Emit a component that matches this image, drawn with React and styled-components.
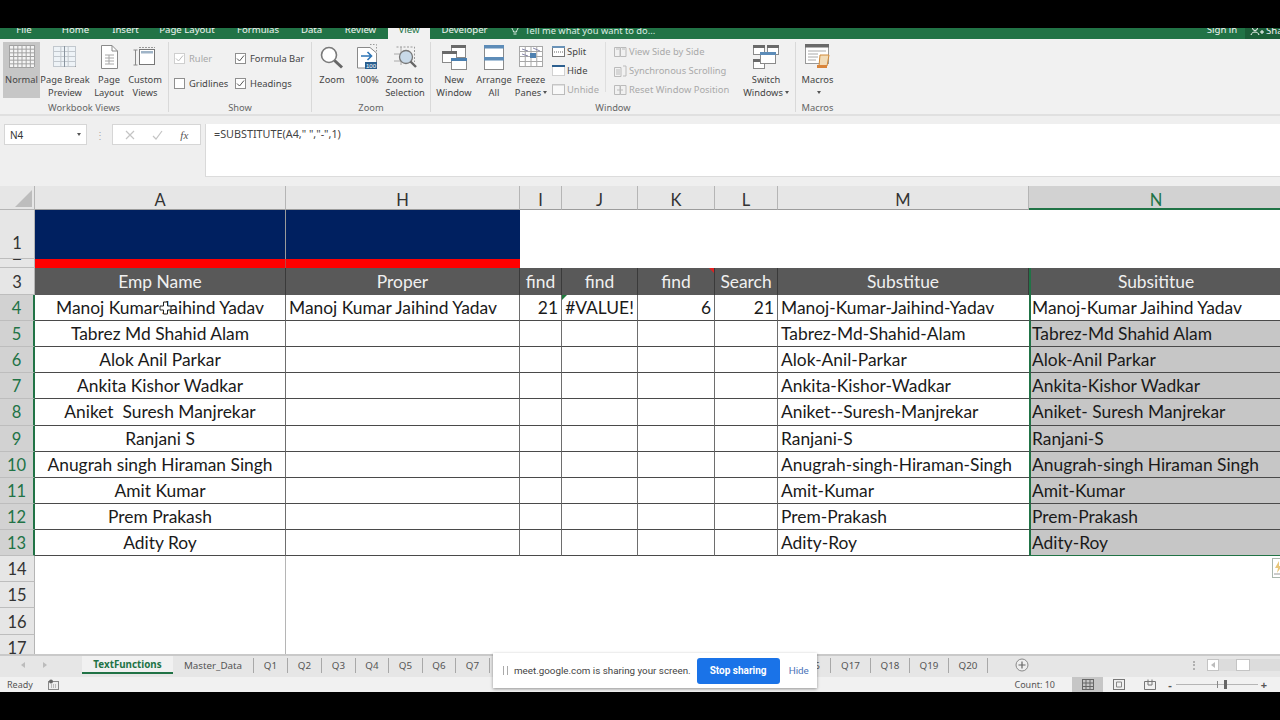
import React from "react";
import styled, { createGlobalStyle } from "styled-components";

const Global = createGlobalStyle`
  html, body { margin: 0; padding: 0; background: #000; }
  * { box-sizing: border-box; }
`;
const UI = `"Noto Sans", "Open Sans", sans-serif`;
const CELL = `"Lato", "Open Sans", sans-serif`;

const Page = styled.div`
  width: 1280px; height: 720px; background: #000; padding-top: 28px; overflow: hidden;
  position: relative; display: flex; flex-direction: column; font-family: ${UI};
`;
const Chrome = styled.div`
  height: 664px; display: flex; flex-direction: column; overflow: hidden; position: relative;
`;
const TabBar = styled.div`
  height: 11px; flex: none; background: #217346; display: flex; align-items: flex-end; overflow: hidden;
`;
const MenuTab = styled.div`
  width: ${p => p.$w}px; flex: none; height: 18px; line-height: 18px; text-align: center; font-size: 9.6px;
  color: ${p => (p.$on ? "#217346" : "#f2f2f2")}; background: ${p => (p.$on ? "#f1f1f1" : "transparent")};
`;
const TellMe = styled.div`
  display: flex; align-items: center; gap: 5px; height: 18px; margin-left: 11px; font-size: 9.3px; color: #dfeee5; flex: none; width: 689px;
`;
const Share = styled.div`
  flex: 1; height: 18px; background: #1b5e38; display: flex; align-items: center; gap: 2px; padding-left: 5px; color: #f2f2f2; font-size: 9.6px; overflow: hidden; white-space: nowrap;
`;
const SignIn = styled(MenuTab)``;

const Ribbon = styled.div`
  height: 77px; flex: none; background: #f1f1f1; display: flex; padding-top: 3px; border-bottom: 2px solid #e0e0e0;
`;
const Group = styled.div`
  width: ${p => p.$w}px; height: 70px; flex: none; display: flex; flex-direction: column;
  border-right: ${p => (p.$last ? "none" : "1px solid #d9d9d9")}; padding-left: ${p => p.$pl || 0}px;
`;
const GroupBody = styled.div`
  height: 56px; display: flex; flex: none; position: relative;
`;
const GroupLabel = styled.div`
  margin-left: ${p => (p.$ml ? -p.$ml : 0)}px; margin-top: 4px; height: 12px; flex: none; line-height: 12px; text-align: center; font-size: 9.3px; color: #666;
`;
const BigButton = styled.div`
  width: ${p => p.$w}px; flex: none; height: 56px; display: flex; flex-direction: column; align-items: center;
  background: ${p => (p.$on ? "#c6c6c6" : "transparent")};
`;
const IconSlot = styled.div`
  height: 30px; flex: none; display: flex; align-items: center; justify-content: center;
`;
const BigLabel = styled.div`
  font-size: 9.3px; line-height: 13px; color: #444; text-align: center; white-space: nowrap; padding-top: 1px;
`;
const Caret = styled.span`
  display: inline-block; width: 0; height: 0; margin-left: 2px; vertical-align: 2px;
  border-left: 2.5px solid transparent; border-right: 2.5px solid transparent; border-top: 3px solid #555;
`;
const ShowGrid = styled.div`
  display: grid; grid-template-columns: 61px 72px; grid-auto-rows: 25px; padding: 4px 0 0 5px; flex: 1;
`;
const CheckRow = styled.div`
  display: flex; align-items: center; gap: 4px; font-size: 9.4px; color: ${p => (p.$off ? "#a8a8a8" : "#444")}; white-space: nowrap;
`;
const Box = styled.span`
  width: 11px; height: 11px; flex: none; background: #fff; border: 1px solid ${p => (p.$off ? "#cfcfcf" : "#8f8f8f")};
  display: flex; align-items: center; justify-content: center;
`;
const SmallList = styled.div`
  width: ${p => p.$w}px; flex: none; display: flex; flex-direction: column; padding-left: ${p => p.$pl || 0}px;
  border-left: ${p => (p.$sep ? "1px solid #dedede" : "none")}; height: 50px;
`;
const SmallRow = styled.div`
  height: 19px; flex: none; display: flex; align-items: center; gap: 2px; font-size: 9.4px; white-space: nowrap;
  color: ${p => (p.$off ? "#a9a9a9" : "#444")};
`;

const FormulaBar = styled.div`
  height: 70px; flex: none; background: #efefef; display: flex; align-items: flex-start; padding: 8px 0 0 4px;
`;
const NameBox = styled.div`
  width: 83px; height: 21px; background: #fff; border: 1px solid #d6d6d6; display: flex; align-items: center; justify-content: space-between;
  padding: 0 5px; font-size: 10px; color: #333; flex: none;
`;
const Dots = styled.div`
  width: 25px; height: 21px; flex: none; display: flex; align-items: center; justify-content: center; color: #aaa; font-size: 10px; letter-spacing: 0;
`;
const FxBox = styled.div`
  width: 89px; height: 21px; flex: none; background: #fff; border: 1px solid #d6d6d6; display: flex; align-items: center; justify-content: space-around; padding: 0 3px; margin-right: 4px;
`;
const Fx = styled.span`
  font-family: "Liberation Serif", serif; font-style: italic; font-size: 11px; color: #555;
`;
const FormulaInput = styled.div`
  flex: 1; height: 53px; background: #fff; border-left: 1px solid #d9d9d9; border-bottom: 1px solid #dcdcdc; padding: 3px 0 0 8px; font-size: 10.8px; line-height: 14px; color: #444;
`;

const Sheet = styled.div`
  height: 468px; flex: none; display: grid; position: relative; overflow: hidden; background: #fff;
  grid-template-columns: 35px 251px 234px 42px 76px 77px 63px 251px 255px;
  grid-template-rows: 24px 49px 9px 27px repeat(10, 26.12px) repeat(4, 26.2px);
  font-family: ${CELL}; font-size: 17.4px; color: #1a1a1a;
`;
const Corner = styled.div`
  background: #e6e6e6; border-right: 1px solid #b5b5b5; border-bottom: 1px solid #b5b5b5; position: relative; overflow: hidden;
  &::after { content: ""; position: absolute; right: 2px; bottom: 2px; width: 0; height: 0; border-left: 17px solid transparent; border-bottom: 17px solid #bdbdbd; }
`;
const ColHead = styled.div`
  background: ${p => (p.$sel ? "#d2d2d2" : "#e6e6e6")}; color: ${p => (p.$sel ? "#217346" : "#333")};
  border-right: 1px solid ${p => (p.$sel ? "#d2d2d2" : "#b5b5b5")}; border-bottom: ${p => (p.$sel ? "2px solid #217346" : "1px solid #9c9c9c")};
  display: flex; align-items: center; justify-content: center; padding-top: 5px; font-size: 16.5px;
`;
const RowHead = styled.div`
  background: ${p => (p.$sel ? "#d2d2d2" : "#e6e6e6")}; color: ${p => (p.$sel ? "#217346" : "#333")};
  border-right: ${p => (p.$sel ? "2px solid #217346" : "1px solid #b5b5b5")}; border-bottom: 1px solid #bdbdbd;
  display: flex; align-items: ${p => (p.$end ? "flex-end" : "center")}; justify-content: center; overflow: hidden; font-size: 16.5px;
  padding-bottom: ${p => (p.$end ? 5 : 0)}px; padding-top: ${p => (p.$end ? 0 : 1)}px;
`;
const ClippedHead = styled(RowHead)`
  align-items: flex-start; padding: 0;
`;
const ClippedDigit = styled.span`
  margin-top: -15px; line-height: 20px;
`;
const Cell = styled.div`
  min-width: 0; overflow: hidden; white-space: pre; display: flex; align-items: center; padding: 0 3px 0 ${p => (p.$sel ? 1 : 3)}px;
  justify-content: ${p => p.$align || "flex-start"};
  background: ${p => p.$bg || "#fff"}; color: ${p => p.$fg || "#1a1a1a"};
  border-right: ${p => (p.$r ? `1px solid ${p.$r}` : "none")};
  border-bottom: ${p => (p.$b ? `1px solid ${p.$b}` : "none")};
  border-left: ${p => (p.$sel ? "2px solid #217346" : "none")};
  position: relative;
`;
const Flag = styled.span`
  position: absolute; top: 0; width: 0; height: 0; border-top: 5px solid ${p => p.$c};
  ${p => (p.$right ? "right: 0; border-left: 5px solid transparent;" : "left: 0; border-right: 5px solid transparent;")}
`;
const Pointer = styled.span`
  position: absolute; left: 159px; top: 115px; width: 13px; height: 14px; display: flex;
`;
const QuickTag = styled.span`
  position: absolute; left: 1272px; top: 372px; width: 12px; height: 20px; background: #fff; border: 1px solid #a9b6ad; display: flex; align-items: center; padding-left: 1px;
`;

const SheetTabs = styled.div`
  height: 23px; flex: none; background: #e6e6e6; border-top: 2px solid #c9c9c9; padding-bottom: 3px; display: flex; align-items: center; position: relative; overflow: hidden;
`;
const Nav = styled.div`
  width: 82px; flex: none; display: flex; gap: 18px; padding-left: 21px; align-items: center;
`;
const Arrow = styled.span`
  width: 0; height: 0; border-top: 3px solid transparent; border-bottom: 3px solid transparent;
  ${p => (p.$left ? "border-right: 4px solid #bcbcbc;" : "border-left: 4px solid #bcbcbc;")}
`;
const SheetTab = styled.div`
  width: ${p => p.$w}px; flex: none; height: ${p => (p.$on ? "18px" : "15px")}; display: flex; align-items: center; justify-content: center;
  font-size: 9.8px; white-space: nowrap;
  color: ${p => (p.$on ? "#217346" : "#555")}; font-weight: ${p => (p.$on ? 700 : 400)};
  background: ${p => (p.$on ? "#f1f1f1" : "transparent")};
  border-bottom: ${p => (p.$on ? "2px solid #217346" : "none")};
  border-right: ${p => (p.$on ? "none" : "1px solid #a8a8a8")};
`;
const HiddenTabs = styled.div`
  width: 301px; flex: none;
`;
const AddSlot = styled.div`
  width: 41px; flex: none; display: flex; justify-content: flex-end;
`;
const ScrollArea = styled.div`
  margin-left: auto; display: flex; align-items: center; height: 100%;
`;
const VDots = styled.span`
  width: 2px; height: 9px; margin-right: 12px; border-left: 2px dotted #b0b0b0;
`;
const ScrollBtn = styled.span`
  width: 12px; height: 12px; background: #fff; border: 1px solid #c4c4c4; display: flex; align-items: center; justify-content: center;
`;
const Track = styled.span`
  width: 61px; height: 12px; background: #dcdcdc; display: flex; padding-left: 17px;
`;
const Thumb = styled.span`
  width: 14px; height: 12px; background: #fff; border: 1px solid #c4c4c4;
`;

const Status = styled.div`
  height: 15px; flex: none; background: #f1f1f1; display: flex; align-items: center; font-size: 9px; color: #555; padding-left: 7px; overflow: hidden;
`;
const StatusGap = styled.span`
  width: ${p => p.$w}px; flex: none;
`;
const Count = styled.span`
  margin-left: auto; margin-right: 17px;
`;
const ViewBtn = styled.div`
  width: 31px; height: 15px; flex: none; display: flex; align-items: center; justify-content: center;
  background: ${p => (p.$on ? "#c6c6c6" : "transparent")};
`;
const ZoomSlider = styled.div`
  width: 82px; height: 1px; background: #b5b5b5; position: relative; margin: 0 1px; flex: none;
  &::before { content: ""; position: absolute; left: 41px; top: -3px; width: 1px; height: 7px; background: #888; }
  &::after { content: ""; position: absolute; left: 48px; top: -4px; width: 3px; height: 9px; background: #666; }
`;
const Pm = styled.span`
  font-size: 11px; font-weight: 700; color: #555; width: 10px; text-align: center; flex: none;
`;

const Popup = styled.div`
  position: absolute; left: 493px; top: 653px; width: 324px; height: 35px; background: #fff; box-shadow: 0 1px 3px rgba(0,0,0,.4);
  display: flex; align-items: center; padding-left: 10px; font-size: 9.8px; color: #444; white-space: nowrap; font-family: "Roboto", ${UI};
`;
const Grip = styled.span`
  width: 5px; height: 9px; border-left: 1px solid #aaa; border-right: 1px solid #aaa; margin-right: 6px; flex: none;
`;
const StopBtn = styled.div`
  width: 83px; height: 26px; background: #1a73e8; color: #fff; border-radius: 3px; display: flex; align-items: center; justify-content: center; font-weight: 700; font-size: 10px; margin-left: 6px; flex: none;
`;
const HideLink = styled.span`
  color: #4a72b8; margin-left: 9px; font-size: 9.8px;
`;

/* ---- icons ---- */
const S = ({ w, h, children }) => <svg width={w} height={h} viewBox={`0 0 ${w} ${h}`} fill="none" style={{ display: "block", flex: "none" }}>{children}</svg>;

const GridLines = ({ x, y, w, h, nx, ny, c }) => {
  const out = [];
  for (let i = 0; i <= nx; i++) out.push(<path key={"x" + i} d={`M${x + (w * i) / nx + .5} ${y}V${y + h}`} stroke={c} />);
  for (let i = 0; i <= ny; i++) out.push(<path key={"y" + i} d={`M${x} ${y + (h * i) / ny + .5}H${x + w}`} stroke={c} />);
  return <>{out}</>;
};
const INormal = () => <S w={26} h={24}><rect x=".5" y=".5" width="25" height="22" fill="#f4f4f4" /><GridLines x={0} y={0} w={25} h={22} nx={6} ny={6} c="#a2a2a2" /></S>;
const IBreak = () => <S w={24} h={22}><rect x=".5" y=".5" width="22" height="20" fill="#eef3f7" stroke="#a0a0a0" /><GridLines x={0} y={0} w={22} h={20} nx={3} ny={4} c="#c2c8ce" /><path d="M11.5 0V21" stroke="#8a949e" /></S>;
const IPageLayout = () => <S w={19} h={24}><path d="M1.5.5H12L17.5 6V23.5H1.5Z" fill="#fff" stroke="#8a8a8a" /><path d="M12 .5V6H17.5" stroke="#8a8a8a" /><path d="M5 10H14M5 13H14M5 16H14M5 19H14M9 10V19" stroke="#a8a8a8" /></S>;
const ICustom = () => <S w={24} h={22}><path d="M2.5 4V19M.5 4H4.5M.5 19H4.5" stroke="#8a8a8a" /><rect x="6.5" y="3.5" width="15" height="15" fill="#fff" stroke="#777" /><rect x="8" y="5" width="12" height="2.5" fill="#9fb4c7" /><path d="M6 1.5H22" stroke="#999" strokeDasharray="2 1" /></S>;
const IZoom = () => <S w={24} h={23}><circle cx="9" cy="9" r="7.5" fill="#fff" stroke="#7a7a7a" strokeWidth="1.6" /><path d="M14.5 14.5L22 21.5" stroke="#666" strokeWidth="3" /></S>;
const I100 = () => <S w={22} h={26}><path d="M1.5 3.5H14L20.5 9V24H1.5Z" fill="#fff" stroke="#8a8a8a" /><path d="M14 .5H20.5V9" stroke="#999" strokeDasharray="1.5 1.5" /><path d="M5 12H15M11.5 8L15.5 12L11.5 16" stroke="#2e75b6" strokeWidth="1.6" /><rect x="9" y="18" width="12" height="7" fill="#2a5f8f" /><text x="15" y="24" fontSize="6" fill="#fff" textAnchor="middle" fontFamily="Liberation Sans, sans-serif">100</text></S>;
const IZoomSel = () => <S w={25} h={24}><path d="M3.5 2H21.5V17" stroke="#999" strokeDasharray="2 1.5" /><path d="M1 9H19M8 2V20M1 16H8" stroke="#aaa" /><circle cx="13" cy="12" r="6.5" fill="#c8d9e8" stroke="#777" strokeWidth="1.3" /><path d="M17.5 16.5L23 22" stroke="#666" strokeWidth="2.4" /></S>;
const Win = ({ x, y, w, h, top = "#6a6a6a" }) => <><rect x={x + .5} y={y + .5} width={w} height={h} fill="#fff" stroke="#8a8a8a" /><rect x={x} y={y} width={w + 1} height="3" fill={top} /></>;
const INewWin = () => <S w={25} h={25}><Win x={9} y={0} w={14} h={12} /><Win x={0} y={6} w={14} h={11} /><Win x={9} y={13} w={15} h={11} top="#4a7fb0" /></S>;
const IArrange = () => <S w={20} h={25}><rect x=".5" y=".5" width="19" height="24" fill="#fff" stroke="#8a8a8a" /><rect x="0" y="0" width="20" height="3.5" fill="#5d8cb8" /><rect x="0" y="12" width="20" height="3.5" fill="#5d8cb8" /></S>;
const IFreeze = () => <S w={25} h={22}><rect x=".5" y=".5" width="23" height="20" fill="#fff" stroke="#a0a0a0" /><GridLines x={0} y={0} w={23} h={20} nx={4} ny={4} c="#a8a8a8" /><rect x="11" y="7" width="6" height="5" fill="#4f81b0" /><path d="M3 3L9 5M14 2L21 5M3 8L9 10" stroke="#88a" /></S>;
const ISplit = () => <S w={13} h={11}><rect x=".5" y=".5" width="12" height="10" fill="#fff" stroke="#777" /><rect x="0" y="0" width="13" height="2" fill="#6a93b8" /><path d="M2 6H11" stroke="#666" strokeDasharray="1 1" /></S>;
const IHide = () => <S w={13} h={11}><rect x=".5" y=".5" width="12" height="10" fill="#fff" stroke="#aaa" strokeDasharray="1 1" /><rect x="0" y="0" width="13" height="2" fill="#2c5f8f" /></S>;
const IUnhide = () => <S w={13} h={11}><rect x=".5" y=".5" width="12" height="10" fill="#f8f8f8" stroke="#bbb" /><rect x="0" y="0" width="13" height="1.5" fill="#c6c6c6" /></S>;
const ISideBy = () => <S w={13} h={11}><path d="M.5 1.5H6V10.5H.5ZM6.5 1.5H12V10.5H6.5ZM2 3H5M8 3H11" stroke="#bbb" /></S>;
const ISync = () => <S w={13} h={12}><path d="M.5 2.5H7V11.5H.5ZM2 5H6M2 7H6M2 9H6M9 1H12V11H9" stroke="#bbb" /></S>;
const IReset = () => <S w={13} h={11}><path d="M.5 1.5H6V10.5H.5ZM6.5 1.5H12V10.5H6.5ZM3 6H9" stroke="#bbb" /></S>;
const ISwitch = () => <S w={26} h={24}><Win x={0} y={0} w={11} h={9} /><Win x={14} y={0} w={11} h={9} /><Win x={0} y={14} w={11} h={9} /><Win x={7} y={7} w={15} h={11} top="#5d8cb8" /></S>;
const IMacros = () => <S w={26} h={26}><rect x=".5" y=".5" width="23" height="19" fill="#fff" stroke="#999" /><rect x="0" y="0" width="24" height="3.5" fill="#6a6a6a" /><path d="M3 7H21M3 10H13M3 13H13M3 16H11" stroke="#aaa" /><path d="M15 11H24L22 22H14Z" fill="#f2dcb8" stroke="#d08a3a" /><rect x="12" y="21" width="10" height="3" fill="#d9843a" /></S>;
const Tick = ({ c = "#666" }) => <S w={9} h={9}><path d="M1 4.5L3.5 7L8 1.5" stroke={c} strokeWidth="1" /></S>;
const Bulb = () => <S w={10} h={12}><path d="M2 4C2 1 8 1 8 4C8 5.5 6.5 6 6.5 8H3.5C3.5 6 2 5.5 2 4ZM3.5 10H6.5" stroke="#dfeee5" /></S>;
const ShareIco = () => <S w={14} h={13}><circle cx="5" cy="4" r="2.5" stroke="#fff" /><path d="M1 11C2 7 8 7 9 11M10 8H14M12 6V10" stroke="#fff" /></S>;
const PlusCursor = () => <S w={13} h={14}><path d="M4.5 1H8.5V5H12V9H8.5V13H4.5V9H1V5H4.5Z" fill="#fff" stroke="#222" /></S>;
const Bolt = () => <S w={9} h={14}><path d="M5 0L1 7H4L3 12L8 5H5Z" fill="#e8c67a" /><path d="M0 13H8" stroke="#999" /></S>;
const AddIco = () => <S w={14} h={14}><circle cx="7" cy="7" r="6" fill="#eee" stroke="#8a8a8a" /><path d="M3.5 7H10.5M7 3.5V10.5" stroke="#666" strokeWidth="1.2" /></S>;
const MacroRec = () => <S w={12} h={11}><rect x=".5" y="2.5" width="10" height="8" fill="#eee" stroke="#888" /><circle cx="3" cy="2.5" r="2" fill="#666" /><path d="M3 6H9M3 8H9" stroke="#888" strokeDasharray="1 1" /></S>;
const VNormal = () => <S w={12} h={11}><rect x=".5" y=".5" width="11" height="10" stroke="#666" /><path d="M4 0V11M8 0V11M0 4H12M0 7.5H12" stroke="#666" /></S>;
const VLayout = () => <S w={12} h={11}><rect x=".5" y=".5" width="11" height="10" stroke="#777" /><path d="M3.5 3H8.5V8H3.5Z" stroke="#888" /></S>;
const VBreak = () => <S w={12} h={11}><path d="M.5 2.5H11.5V10.5H.5ZM4 .5V6H8V.5" stroke="#777" /></S>;

/* ---- data ---- */
const COLS = [["A"], ["H"], ["I"], ["J"], ["K"], ["L"], ["M"], ["N", true]];
const HEADS = ["Emp Name", "Proper", "find", "find", "find", "Search", "Substitue", "Subsititue"];
const NAMES = ["Manoj Kumar Jaihind Yadav", "Tabrez Md Shahid Alam", "Alok Anil Parkar", "Ankita Kishor Wadkar", "Aniket  Suresh Manjrekar", "Ranjani S", "Anugrah singh Hiraman Singh", "Amit Kumar", "Prem Prakash", "Adity Roy"];
const SUB1 = ["Manoj-Kumar-Jaihind-Yadav", "Tabrez-Md-Shahid-Alam", "Alok-Anil-Parkar", "Ankita-Kishor-Wadkar", "Aniket--Suresh-Manjrekar", "Ranjani-S", "Anugrah-singh-Hiraman-Singh", "Amit-Kumar", "Prem-Prakash", "Adity-Roy"];
const SUB2 = ["Manoj-Kumar Jaihind Yadav", "Tabrez-Md Shahid Alam", "Alok-Anil Parkar", "Ankita-Kishor Wadkar", "Aniket- Suresh Manjrekar", "Ranjani-S", "Anugrah-singh Hiraman Singh", "Amit-Kumar", "Prem-Prakash", "Adity-Roy"];
const MENU = [["File", 48], ["Home", 55], ["Insert", 45], ["Page Layout", 78], ["Formulas", 64], ["Data", 43], ["Review", 55], ["View", 42, true], ["Developer", 69]];
const TABS_A = [["Master_Data", 81], ["Q1", 34], ["Q2", 34], ["Q3", 34], ["Q4", 33], ["Q5", 34], ["Q6", 33], ["Q7", 34]];
const TABS_B = [["Q16", 40], ["Q17", 40], ["Q18", 39], ["Q19", 39], ["Q20", 39]];

const Big = ({ w, on, icon, a, b, caret }) => (
  <BigButton $w={w} $on={on}>
    <IconSlot>{icon}</IconSlot>
    <BigLabel>{a}<br />{b}{caret && <Caret />}</BigLabel>
  </BigButton>
);
const Check = ({ label, on, off }) => (
  <CheckRow $off={off}><Box $off={off}>{on && <Tick c={off ? "#bbb" : "#555"} />}</Box>{label}</CheckRow>
);

export default function App() {
  const LINE = "#4a4a4a";
  return (
    <Page>
      <Global />
      <Chrome>
        <TabBar>
          {MENU.map(([t, w, on]) => <MenuTab key={t} $w={w} $on={on}>{t}</MenuTab>)}
          <TellMe><Bulb />Tell me what you want to do...</TellMe>
          <SignIn $w={46}>Sign in</SignIn>
          <Share><ShareIco />Share</Share>
        </TabBar>

        <Ribbon>
          <Group $w={169} $pl={3}>
            <GroupBody>
              <Big w={37} on icon={<INormal />} a="Normal" />
              <Big w={50} icon={<IBreak />} a="Page Break" b="Preview" />
              <Big w={38} icon={<IPageLayout />} a="Page" b="Layout" />
              <Big w={34} icon={<ICustom />} a="Custom" b="Views" />
            </GroupBody>
            <GroupLabel $ml={3}>Workbook Views</GroupLabel>
          </Group>
          <Group $w={143}>
            <GroupBody>
              <ShowGrid>
                <Check label="Ruler" on off />
                <Check label="Formula Bar" on />
                <Check label="Gridlines" />
                <Check label="Headings" on />
              </ShowGrid>
            </GroupBody>
            <GroupLabel>Show</GroupLabel>
          </Group>
          <Group $w={119} $pl={2}>
            <GroupBody>
              <Big w={36} icon={<IZoom />} a="Zoom" />
              <Big w={34} icon={<I100 />} a="100%" />
              <Big w={42} icon={<IZoomSel />} a="Zoom to" b="Selection" />
            </GroupBody>
            <GroupLabel $ml={2}>Zoom</GroupLabel>
          </Group>
          <Group $w={365} $pl={3}>
            <GroupBody>
              <Big w={40} icon={<INewWin />} a="New" b="Window" />
              <Big w={40} icon={<IArrange />} a="Arrange" b="All" />
              <Big w={34} icon={<IFreeze />} a="Freeze" b="Panes" caret />
              <SmallList $w={57} $pl={4}>
                <SmallRow><ISplit />Split</SmallRow>
                <SmallRow><IHide />Hide</SmallRow>
                <SmallRow $off><IUnhide />Unhide</SmallRow>
              </SmallList>
              <SmallList $w={132} $pl={8} $sep>
                <SmallRow $off><ISideBy />View Side by Side</SmallRow>
                <SmallRow $off><ISync />Synchronous Scrolling</SmallRow>
                <SmallRow $off><IReset />Reset Window Position</SmallRow>
              </SmallList>
              <Big w={58} icon={<ISwitch />} a="Switch" b="Windows" caret />
            </GroupBody>
            <GroupLabel $ml={3}>Window</GroupLabel>
          </Group>
          <Group $w={43} $last>
            <GroupBody>
              <Big w={43} icon={<IMacros />} a="Macros" b={<Caret />} />
            </GroupBody>
            <GroupLabel>Macros</GroupLabel>
          </Group>
        </Ribbon>

        <FormulaBar>
          <NameBox>N4<Caret /></NameBox>
          <Dots>⋮</Dots>
          <FxBox>
            <S w={10} h={10}><path d="M1 1L9 9M9 1L1 9" stroke="#c4c4c4" strokeWidth="1.2" /></S>
            <S w={11} h={10}><path d="M1 6L4 9L10 1" stroke="#c4c4c4" strokeWidth="1.2" /></S>
            <Fx>fx</Fx>
          </FxBox>
          <FormulaInput>=SUBSTITUTE(A4," ","-",1)</FormulaInput>
        </FormulaBar>

        <Sheet>
          <Corner />
          {COLS.map(([c, sel]) => <ColHead key={c} $sel={sel}>{c}</ColHead>)}

          <RowHead $end>1</RowHead>
          <Cell $bg="#002060" $r="#9a9a9a" />
          <Cell $bg="#002060" />
          {[0, 1, 2, 3, 4, 5].map(i => <Cell key={i} />)}

          <ClippedHead><ClippedDigit>2</ClippedDigit></ClippedHead>
          <Cell $bg="#ff0000" $r="#c04040" />
          <Cell $bg="#ff0000" />
          {[0, 1, 2, 3, 4, 5].map(i => <Cell key={i} />)}

          <RowHead>3</RowHead>
          {HEADS.map((h, i) => (
            <Cell key={i} $bg="#595959" $fg="#f0f0f0" $align="center" $r="#3a3a3a" $sel={i === 7}>
              {h}{i === 4 && <Flag $c="#e02020" $right />}
            </Cell>
          ))}

          {NAMES.map((n, i) => {
            const first = i === 0;
            const fill = first ? "#fff" : "#c6c6c6";
            const last = i === 9;
            return (
              <React.Fragment key={n}>
                <RowHead $sel>{i + 4}</RowHead>
                <Cell $align="center" $r="#6e6e6e" $b={LINE}>{n}</Cell>
                <Cell $r="#6e6e6e" $b={LINE}>{first ? "Manoj Kumar Jaihind Yadav" : ""}</Cell>
                <Cell $align="flex-end" $r="#6e6e6e" $b={LINE}>{first ? "21" : ""}</Cell>
                <Cell $r="#6e6e6e" $b={LINE} $align="center">{first ? "#VALUE!" : ""}{first && <Flag $c="#1f7a3d" />}</Cell>
                <Cell $align="flex-end" $r="#6e6e6e" $b={LINE}>{first ? "6" : ""}</Cell>
                <Cell $align="flex-end" $r="#6e6e6e" $b={LINE}>{first ? "21" : ""}</Cell>
                <Cell $b={LINE}>{SUB1[i]}</Cell>
                <Cell $bg={fill} $sel $b={last ? "#217346" : LINE}>{SUB2[i]}</Cell>
              </React.Fragment>
            );
          })}

          {[14, 15, 16, 17].map(r => (
            <React.Fragment key={r}>
              <RowHead>{r}</RowHead>
              <Cell $r="#b5b5b5" />
              {[0, 1, 2, 3, 4, 5, 6].map(i => <Cell key={i} />)}
            </React.Fragment>
          ))}

          <Pointer><PlusCursor /></Pointer>
          <QuickTag><Bolt /></QuickTag>
        </Sheet>

        <SheetTabs>
          <Nav><Arrow $left /><Arrow /></Nav>
          <SheetTab $w={91} $on>TextFunctions</SheetTab>
          {TABS_A.map(([t, w]) => <SheetTab key={t} $w={w}>{t}</SheetTab>)}
          <HiddenTabs />
          {TABS_B.map(([t, w]) => <SheetTab key={t} $w={w}>{t}</SheetTab>)}
          <AddSlot><AddIco /></AddSlot>
          <ScrollArea>
            <VDots />
            <ScrollBtn><Arrow $left /></ScrollBtn>
            <Track><Thumb /></Track>
          </ScrollArea>
        </SheetTabs>

        <Status>
          Ready
          <StatusGap $w={15} />
          <MacroRec />
          <Count>Count: 10</Count>
          <ViewBtn $on><VNormal /></ViewBtn>
          <ViewBtn><VLayout /></ViewBtn>
          <ViewBtn><VBreak /></ViewBtn>
          <Pm>-</Pm>
          <ZoomSlider />
          <Pm>+</Pm>
          <StatusGap $w={11} />
        </Status>
      </Chrome>

      <Popup>
        <Grip />
        meet.google.com is sharing your screen.
        <StopBtn>Stop sharing</StopBtn>
        <HideLink>Hide</HideLink>
      </Popup>
    </Page>
  );
}
